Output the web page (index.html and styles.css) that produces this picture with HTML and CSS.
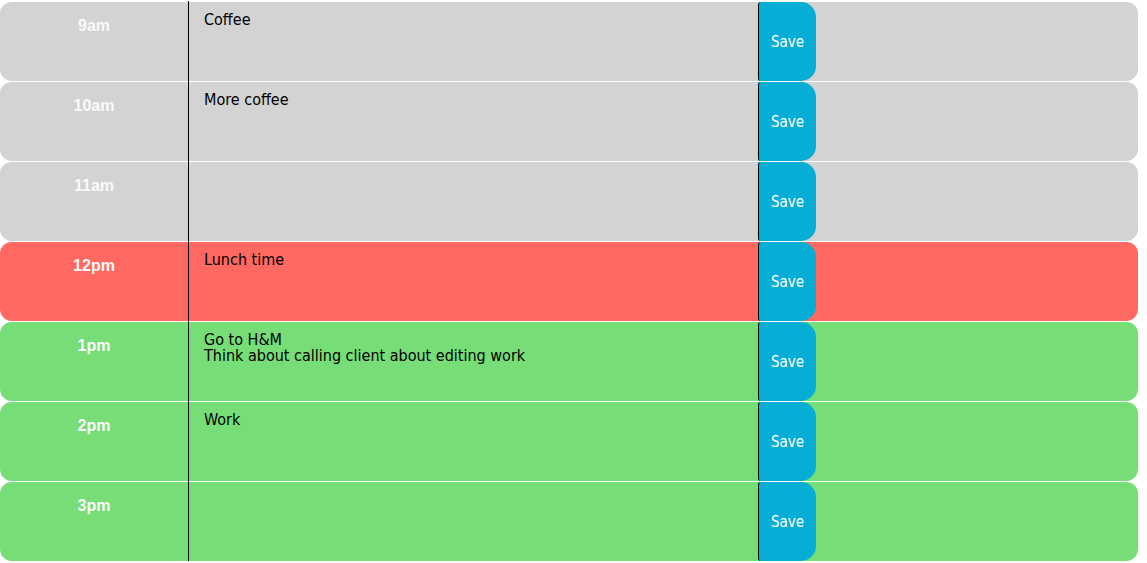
FILE: index.html
```html
<!DOCTYPE html>
<html>
<head>
<meta charset="utf-8">
<link rel="stylesheet" href="styles.css">
</head>
<body>
<div class="planner">
  <div class="row past">
    <div class="hour">9am</div>
    <textarea class="task">Coffee</textarea>
    <button class="save-btn">Save</button>
  </div>
  <div class="row past">
    <div class="hour">10am</div>
    <textarea class="task">More coffee</textarea>
    <button class="save-btn">Save</button>
  </div>
  <div class="row past">
    <div class="hour">11am</div>
    <textarea class="task"></textarea>
    <button class="save-btn">Save</button>
  </div>
  <div class="row present">
    <div class="hour">12pm</div>
    <textarea class="task">Lunch time</textarea>
    <button class="save-btn">Save</button>
  </div>
  <div class="row future">
    <div class="hour">1pm</div>
    <textarea class="task">Go to H&amp;M
Think about calling client about editing work</textarea>
    <button class="save-btn">Save</button>
  </div>
  <div class="row future">
    <div class="hour">2pm</div>
    <textarea class="task">Work</textarea>
    <button class="save-btn">Save</button>
  </div>
  <div class="row future">
    <div class="hour">3pm</div>
    <textarea class="task"></textarea>
    <button class="save-btn">Save</button>
  </div>
</div>
</body>
</html>
```
FILE: styles.css
```css
html, body {
  margin: 0;
  padding: 0;
  background: #ffffff;
  overflow: hidden;
}

.planner {
  width: 1138px;
  padding-top: 1px;
}

.row {
  display: flex;
  height: 79px;
  border-top: 1px solid #ffffff;
  border-radius: 12px;
}

.past { background-color: #d3d3d3; }
.present { background-color: #ff6961; }
.future { background-color: #77dd77; }

.hour {
  width: 188px;
  flex: none;
  text-align: center;
  padding-top: 15px;
  box-sizing: border-box;
  font-family: "Liberation Sans", Arial, sans-serif;
  font-weight: bold;
  font-size: 16px;
  color: #fafafa;
}

.task {
  width: 570px;
  flex: none;
  height: 80px;
  margin: -1px 0 0 0;
  box-sizing: border-box;
  background: transparent;
  border: none;
  border-left: 1px solid #000000;
  padding: 11px 15px;
  resize: none;
  overflow: hidden;
  font-family: "DejaVu Sans Condensed", "DejaVu Sans", sans-serif;
  font-size: 16px;
  line-height: 16px;
  color: #000000;
  outline: none;
}

.save-btn {
  width: 58px;
  flex: none;
  height: 79px;
  margin: 0;
  padding: 0;
  border: none;
  border-left: 1px solid #000000;
  border-radius: 3px 15px 15px 3px;
  background-color: #06aed5;
  color: #ffffff;
  font-family: "DejaVu Sans Condensed", "DejaVu Sans", sans-serif;
  font-size: 15px;
}
```
